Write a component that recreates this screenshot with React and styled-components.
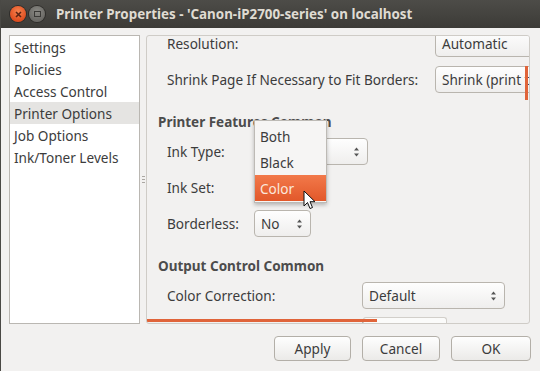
import { createGlobalStyle, styled } from "styled-components";

const GlobalStyle = createGlobalStyle`
  html, body {
    margin: 0;
    padding: 0;
    background: #f2f1f0;
    overflow: hidden;
  }
  body {
    font-family: "Noto Sans", "DejaVu Sans", sans-serif;
    color: #3c3c3c;
  }
  * {
    box-sizing: border-box;
  }
`;

const pages = [
  "Settings",
  "Policies",
  "Access Control",
  "Printer Options",
  "Job Options",
  "Ink/Toner Levels",
];

// the content is scrolled, so the first combos run past the frame's right edge
const sections = [
  {
    title: null,
    col: 268,
    rows: [
      { label: "Resolution:", value: "Automatic", w: 120 },
      { label: "Shrink Page If Necessary to Fit Borders:", value: "Shrink (print the whole page)", w: 120 },
    ],
  },
  {
    title: "Printer Features Common",
    col: 87,
    rows: [
      { label: "Ink Type:", value: "Color", w: 114, arrows: true },
      { label: "Ink Set:", value: "", w: 0 },
      { label: "Borderless:", value: "No", w: 57, arrows: true },
    ],
  },
  {
    title: "Output Control Common",
    col: 195,
    rows: [
      { label: "Color Correction:", value: "Default", w: 143, arrows: true },
      { label: "", value: "", w: 84 },
    ],
  },
];

const Arrows = () => (
  <svg width="7" height="12" viewBox="0 0 7 12">
    <path d="M1 4.5 L3.5 1.5 L6 4.5 Z" fill="#555" />
    <path d="M1 7.5 L3.5 10.5 L6 7.5 Z" fill="#555" />
  </svg>
);

const Cursor = () => (
  <svg width="13" height="20" viewBox="0 0 13 20">
    <path
      d="M1 1 L1 16 L4.5 12.5 L7 18.5 L9.5 17.5 L7 11.7 L12 11.7 Z"
      fill="#fff"
      stroke="#111"
      strokeWidth="1"
      strokeLinejoin="round"
    />
  </svg>
);

export default function App() {
  return (
    <Window>
      <GlobalStyle />
      <TitleBar>
        <CloseButton>
          <svg width="7" height="7" viewBox="0 0 7 7">
            <path d="M1 1 L6 6 M6 1 L1 6" stroke="#5a2414" strokeWidth="1.6" />
          </svg>
        </CloseButton>
        <MaxButton>
          <span />
        </MaxButton>
        <Title>Printer Properties - 'Canon-iP2700-series' on localhost</Title>
      </TitleBar>

      <Body>
        <Main>
          <PageList>
            {pages.map((p) => (
              <PageItem key={p} $selected={p === "Printer Options"}>
                {p}
              </PageItem>
            ))}
          </PageList>

          <Handle>
            <i />
            <i />
            <i />
          </Handle>

          <Frame>
            <Content>
              {sections.map((s, i) => (
                <Section key={i}>
                  {s.title && <SectionTitle>{s.title}</SectionTitle>}
                  <Grid $col={s.col}>
                    {s.rows.map((r, j) => (
                      <Row key={j}>
                        <Label>{r.label}</Label>
                        {r.w > 0 ? (
                          <Combo $w={r.w}>
                            <ComboText>{r.value}</ComboText>
                            {r.arrows && <Arrows />}
                          </Combo>
                        ) : (
                          <ComboSpace />
                        )}
                      </Row>
                    ))}
                  </Grid>
                </Section>
              ))}
            </Content>
            <VScroll />
            <HTrack />
            <HScroll />
          </Frame>
        </Main>

        <ButtonRow>
          <Button $w={77}>Apply</Button>
          <Button $w={78}>Cancel</Button>
          <Button $w={80}>OK</Button>
        </ButtonRow>
      </Body>

      <Popup>
        <MenuItem>Both</MenuItem>
        <MenuItem>Black</MenuItem>
        <MenuItem $active>Color</MenuItem>
      </Popup>
      <CursorWrap>
        <Cursor />
      </CursorWrap>
    </Window>
  );
}

const Window = styled.div`
  position: relative;
  width: 540px;
  height: 371px;
  display: flex;
  flex-direction: column;
  background: #f2f1f0;
  border-left: 1px solid #4a4945;
  overflow: hidden;
`;

const TitleBar = styled.div`
  height: 28px;
  flex: none;
  display: flex;
  align-items: center;
  padding-left: 9px;
  background: linear-gradient(#4d4c48, #3c3b37);
`;

const CloseButton = styled.div`
  width: 16px;
  height: 16px;
  border-radius: 50%;
  background: radial-gradient(circle at 50% 35%, #f6834f, #df4d1f 70%);
  box-shadow: 0 0 0 1px #2e2d2a;
  display: flex;
  align-items: center;
  justify-content: center;
`;

const MaxButton = styled.div`
  width: 16px;
  height: 16px;
  margin-left: 3px;
  border-radius: 50%;
  background: radial-gradient(circle at 50% 35%, #8a8984, #6a6965 70%);
  box-shadow: 0 0 0 1px #2e2d2a;
  display: flex;
  align-items: center;
  justify-content: center;

  span {
    width: 7px;
    height: 6px;
    border: 1px solid #3a3936;
  }
`;

const Title = styled.div`
  margin-left: 11px;
  font-size: 13.4px;
  font-weight: bold;
  color: #dfdbd2;
  white-space: nowrap;
`;

const Body = styled.div`
  flex: 1;
  display: flex;
  flex-direction: column;
  padding: 7px 9px 10px 8px;
`;

const Main = styled.div`
  height: 289px;
  display: flex;
`;

const PageList = styled.div`
  width: 131px;
  background: #fff;
  border: 1px solid #bab7b2;
`;

const PageItem = styled.div`
  height: 22px;
  line-height: 23px;
  padding-left: 4px;
  font-size: 13.6px;
  white-space: nowrap;
  background: ${(p) => (p.$selected ? "#e5e4e2" : "transparent")};
`;

const Handle = styled.div`
  width: 6px;
  display: flex;
  flex-direction: column;
  justify-content: center;
  align-items: center;
  gap: 2px;

  i {
    display: block;
    width: 3px;
    height: 1px;
    background: #aaa7a2;
  }
`;

const Frame = styled.div`
  position: relative;
  width: 384px;
  border: 1px solid #cfccc7;
  border-radius: 3px;
  overflow: hidden;
`;

const Content = styled.div`
  margin-top: -6px;
  padding-left: 11px;
  display: flex;
  flex-direction: column;
`;

const Section = styled.div`
  display: flex;
  flex-direction: column;
`;

const SectionTitle = styled.div`
  height: 18px;
  line-height: 18px;
  margin: 20px 0 7px;
  font-size: 13.5px;
  font-weight: bold;
  color: #4c4c4c;
  white-space: nowrap;
`;

const Grid = styled.div`
  display: grid;
  grid-template-columns: ${(p) => p.$col}px max-content;
  row-gap: 9px;
  padding-left: 9px;
`;

const Row = styled.div`
  display: contents;
`;

const Label = styled.div`
  height: 27px;
  line-height: 27px;
  font-size: 13.6px;
  white-space: nowrap;
`;

const Combo = styled.div`
  width: ${(p) => p.$w}px;
  height: 27px;
  display: flex;
  align-items: center;
  justify-content: space-between;
  padding: 0 7px 0 6px;
  border: 1px solid #b9b5ae;
  border-radius: 4px;
  background: linear-gradient(#fefefe, #efeeed);
  font-size: 13.6px;
  overflow: hidden;
`;

const ComboText = styled.span`
  white-space: nowrap;
`;

const ComboSpace = styled.div`
  height: 27px;
`;

const VScroll = styled.div`
  position: absolute;
  right: 1px;
  top: 30px;
  width: 3px;
  height: 34px;
  background: #e0643a;
`;

const HTrack = styled.div`
  position: absolute;
  left: 216px;
  bottom: 0;
  width: 84px;
  height: 6px;
  border: 1px solid #d2cfca;
  border-bottom: none;
  border-radius: 3px 3px 0 0;
  background: #fbfbfa;
`;

const HScroll = styled.div`
  position: absolute;
  left: 0;
  bottom: 1px;
  width: 230px;
  height: 3px;
  background: #e0643a;
`;

const ButtonRow = styled.div`
  margin-top: 12px;
  height: 25px;
  display: flex;
  justify-content: flex-end;
  gap: 11px;
`;

const Button = styled.div`
  width: ${(p) => p.$w}px;
  height: 25px;
  display: flex;
  align-items: center;
  justify-content: center;
  border: 1px solid #b3afa8;
  border-radius: 4px;
  background: linear-gradient(#fefefe, #ebeae8);
  font-size: 13.6px;
`;

const Popup = styled.div`
  position: absolute;
  left: 253px;
  top: 120px;
  width: 73px;
  height: 83px;
  padding-top: 2px;
  background: #f6f5f4;
  border: 1px solid #bdbab5;
  box-shadow: 0 2px 4px rgba(0, 0, 0, 0.25);
`;

const MenuItem = styled.div`
  height: 26px;
  line-height: 27px;
  padding-left: 5px;
  font-size: 13.6px;
  color: ${(p) => (p.$active ? "#fbe8dc" : "#3c3c3c")};
  background: ${(p) => (p.$active ? "linear-gradient(#f2794a, #e2582a)" : "transparent")};
`;

const CursorWrap = styled.div`
  position: absolute;
  left: 302px;
  top: 190px;
  line-height: 0;
`;
